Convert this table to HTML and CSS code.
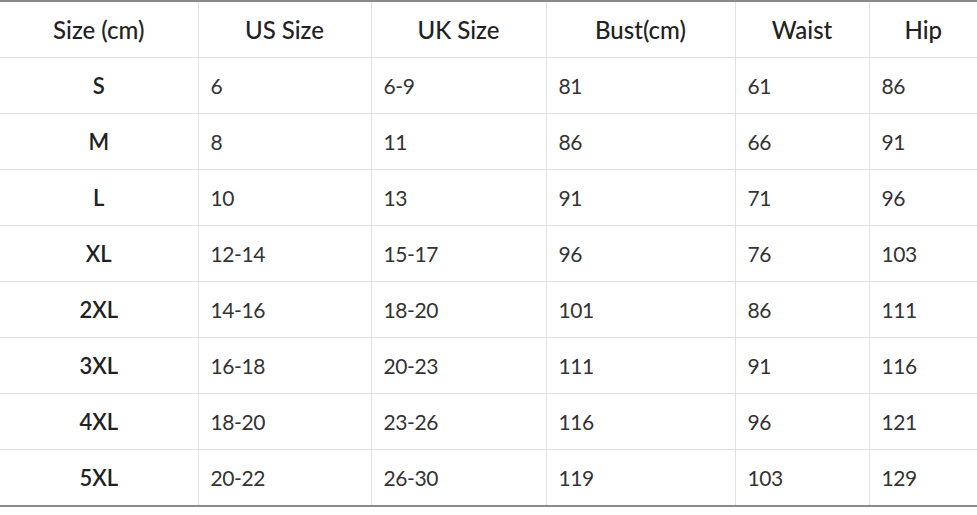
FILE: index.html
```html
<!DOCTYPE html>
<html>
<head>
<meta charset="utf-8">
<link rel="stylesheet" href="styles.css">
</head>
<body>
<table class="size-table">
  <colgroup>
    <col class="c1"><col class="c2"><col class="c3"><col class="c4"><col class="c5"><col class="c6">
  </colgroup>
  <thead>
    <tr><th>Size (cm)</th><th>US Size</th><th>UK Size</th><th>Bust(cm)</th><th>Waist</th><th>Hip</th></tr>
  </thead>
  <tbody>
    <tr><th>S</th><td>6</td><td>6-9</td><td>81</td><td>61</td><td>86</td></tr>
    <tr><th>M</th><td>8</td><td>11</td><td>86</td><td>66</td><td>91</td></tr>
    <tr><th>L</th><td>10</td><td>13</td><td>91</td><td>71</td><td>96</td></tr>
    <tr><th>XL</th><td>12-14</td><td>15-17</td><td>96</td><td>76</td><td>103</td></tr>
    <tr><th>2XL</th><td>14-16</td><td>18-20</td><td>101</td><td>86</td><td>111</td></tr>
    <tr><th>3XL</th><td>16-18</td><td>20-23</td><td>111</td><td>91</td><td>116</td></tr>
    <tr><th>4XL</th><td>18-20</td><td>23-26</td><td>116</td><td>96</td><td>121</td></tr>
    <tr><th>5XL</th><td>20-22</td><td>26-30</td><td>119</td><td>103</td><td>129</td></tr>
  </tbody>
</table>
</body>
</html>
```
FILE: styles.css
```css
html, body {
  margin: 0;
  padding: 0;
  background: #fff;
}
.size-table {
  width: 977px;
  border-collapse: collapse;
  table-layout: fixed;
  font-family: "Lato", "Liberation Sans", sans-serif;
  color: #2b2b2b;
  border-top: 2px solid #8a8a8a;
  border-bottom: 2px solid #8a8a8a;
}
.c1 { width: 198px; }
.c2 { width: 173px; }
.c3 { width: 175px; }
.c4 { width: 189px; }
.c5 { width: 134px; }
.c6 { width: 108px; }
.size-table th,
.size-table td {
  height: 55px;
  padding: 0 12px;
  border-bottom: 1px solid #e2e2e2;
  border-left: 1px solid #e2e2e2;
  font-size: 22px;
  vertical-align: middle;
  line-height: 1;
}
.size-table tr > :first-child {
  border-left: none;
}
.size-table tbody tr:last-child > * {
  border-bottom: none;
}
.size-table thead th {
  font-size: 24px;
  font-weight: 500;
  text-align: center;
  color: #222;
}
.size-table tbody th {
  font-weight: 600;
  text-align: center;
  color: #222;
}
.size-table td {
  font-size: 21px;
  letter-spacing: -0.4px;
  font-weight: 400;
  text-align: left;
  color: #333;
}
```
